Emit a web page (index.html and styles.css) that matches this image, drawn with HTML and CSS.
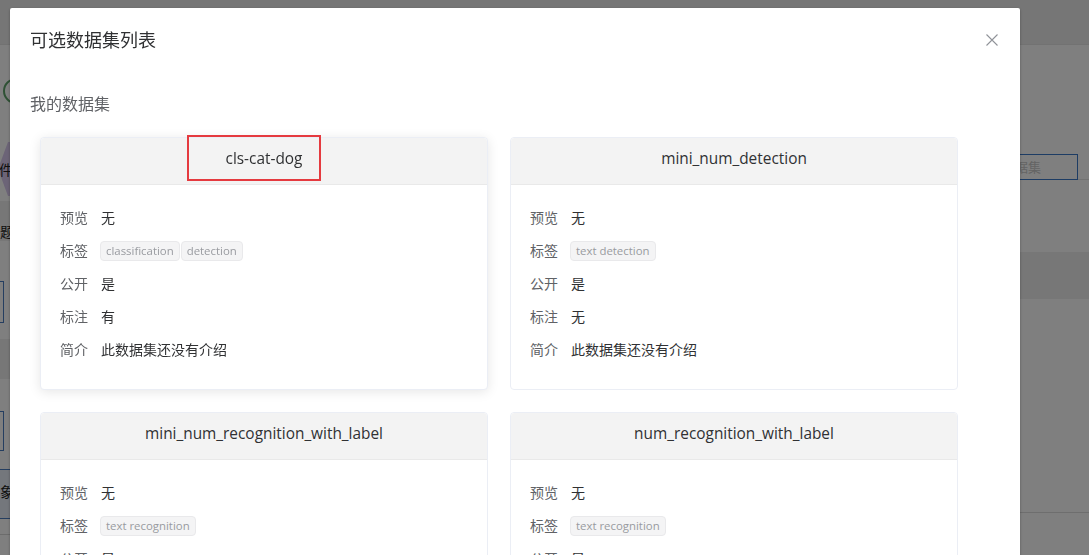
FILE: index.html
```html
<!DOCTYPE html>
<html lang="zh-CN">
<head>
<meta charset="utf-8">
<title>可选数据集列表</title>
<link rel="stylesheet" href="styles.css">
</head>
<body>
<div class="page">
  <div class="topbar"></div>
  <div class="page-body">
    <div class="strip-left">
      <div class="lt-circle"></div>
      <div class="lt-hex"><span>件</span></div>
      <div class="lt-band"><span>题</span></div>
      <div class="lt-box lt-box-1"></div>
      <div class="lt-band lt-band-2"></div>
      <div class="lt-box lt-box-2"></div>
      <div class="lt-fill"><span>象</span></div>
      <div class="lt-line"></div>
    </div>
    <div class="strip-center"></div>
    <div class="strip-right">
      <div class="rt-row">
        <div class="rt-input"><span>据集</span></div>
      </div>
      <div class="rt-band"></div>
      <div class="rt-line"></div>
    </div>
  </div>
</div>
<div class="overlay"></div>
<div class="dialog-wrapper">
  <div class="dialog">
    <div class="dialog-header">
      <span class="dialog-title">可选数据集列表</span>
      <button class="dialog-close" aria-label="关闭">
        <svg width="12" height="12" viewBox="0 0 12 12"><path d="M0.5 0.5 L11.5 11.5 M11.5 0.5 L0.5 11.5" stroke="#909399" stroke-width="1.1" fill="none"/></svg>
      </button>
    </div>
    <div class="dialog-body">
      <div class="section-title">我的数据集</div>
      <div class="card-grid">
        <div class="card card-hover">
          <div class="card-header">cls-cat-dog</div>
          <div class="card-body">
            <div class="row"><span class="label">预览</span><span class="value">无</span></div>
            <div class="row"><span class="label">标签</span><span class="tags"><span class="tag">classification</span><span class="tag">detection</span></span></div>
            <div class="row"><span class="label">公开</span><span class="value">是</span></div>
            <div class="row"><span class="label">标注</span><span class="value">有</span></div>
            <div class="row"><span class="label">简介</span><span class="value">此数据集还没有介绍</span></div>
          </div>
          <div class="highlight"></div>
        </div>
        <div class="card">
          <div class="card-header">mini_num_detection</div>
          <div class="card-body">
            <div class="row"><span class="label">预览</span><span class="value">无</span></div>
            <div class="row"><span class="label">标签</span><span class="tags"><span class="tag">text detection</span></span></div>
            <div class="row"><span class="label">公开</span><span class="value">是</span></div>
            <div class="row"><span class="label">标注</span><span class="value">无</span></div>
            <div class="row"><span class="label">简介</span><span class="value">此数据集还没有介绍</span></div>
          </div>
        </div>
        <div class="card">
          <div class="card-header">mini_num_recognition_with_label</div>
          <div class="card-body">
            <div class="row"><span class="label">预览</span><span class="value">无</span></div>
            <div class="row"><span class="label">标签</span><span class="tags"><span class="tag">text recognition</span></span></div>
            <div class="row"><span class="label">公开</span><span class="value">是</span></div>
            <div class="row"><span class="label">标注</span><span class="value">有</span></div>
            <div class="row"><span class="label">简介</span><span class="value">此数据集还没有介绍</span></div>
          </div>
        </div>
        <div class="card">
          <div class="card-header">num_recognition_with_label</div>
          <div class="card-body">
            <div class="row"><span class="label">预览</span><span class="value">无</span></div>
            <div class="row"><span class="label">标签</span><span class="tags"><span class="tag">text recognition</span></span></div>
            <div class="row"><span class="label">公开</span><span class="value">是</span></div>
            <div class="row"><span class="label">标注</span><span class="value">有</span></div>
            <div class="row"><span class="label">简介</span><span class="value">此数据集还没有介绍</span></div>
          </div>
        </div>
      </div>
    </div>
  </div>
</div>
</body>
</html>
```
FILE: styles.css
```css
* { box-sizing: border-box; }
html, body { margin: 0; height: 100%; overflow: hidden; }
body {
  font-family: "Open Sans", "Noto Sans CJK SC", sans-serif;
  font-size: 14px;
  color: #303133;
  background: #fff;
}

/* background page (mostly covered by the dialog) */
.page { display: flex; flex-direction: column; height: 100vh; }
.topbar { height: 45px; background: #ececec; border-bottom: 1px solid #e4e4e4; flex: none; }
.page-body { flex: 1; display: flex; }
.strip-left { width: 10px; flex: none; }
.strip-center { flex: 1; }
.strip-right { width: 69px; flex: none; }

.lt-circle { width: 26px; height: 26px; margin: 33px 0 0 3px; border: 2px solid #5fa36a; border-radius: 50%; }
.lt-hex {
  width: 40px; height: 54px; margin: 38px 0 0 -2px;
  background: #d9c9ee;
  clip-path: polygon(25% 0, 100% 0, 100% 100%, 25% 100%, 0 50%);
  display: flex; align-items: center;
}
.lt-hex span { margin-left: 1px; font-size: 14px; color: #222; }
.lt-band { width: 40px; height: 40px; margin-top: 5px; background: #eeeeee; display: flex; align-items: flex-end; padding-bottom: 0; }
.lt-band span { font-size: 14px; color: #222; }
.lt-band-2 { margin-top: 16px; }
.lt-box { width: 4px; height: 42px; border: 1px solid #4a7cc0; border-left: 0; }
.lt-box-1 { margin-top: 40px; }
.lt-box-2 { margin-top: 32px; height: 40px; }
.lt-fill { width: 40px; height: 50px; margin-top: 18px; background: #e8eef8; border-top: 1px solid #4a7cc0; border-bottom: 1px solid #4a7cc0; display: flex; align-items: center; padding-bottom: 6px; }
.lt-fill span { font-size: 14px; color: #222; }
.lt-line { width: 40px; height: 1px; margin-top: 15px; background: #d8d8d8; }

.rt-row { margin-top: 109px; height: 26px; border-bottom: 1px solid #e4e4e4; }
.rt-input {
  width: 58px; height: 26px; border: 1px solid #3a78c8; border-left: 0;
  font-size: 13px; line-height: 24px; color: #c8c8c8; white-space: nowrap;
  display: flex;
}
.rt-input span { margin-left: -5px; }
.rt-band { height: 47px; margin-top: 72px; background: #eeeeee; }
.rt-line { height: 1px; margin-top: 213px; background: #dcdcdc; }

.overlay { position: fixed; inset: 0; background: rgba(0, 0, 0, 0.5); }

/* dialog */
.dialog-wrapper { position: fixed; inset: 0; overflow: hidden; }
.dialog {
  position: relative;
  width: 1010px;
  margin: 8px 0 0 10px;
  background: #fff;
  border-radius: 2px;
  box-shadow: 0 1px 3px rgba(0, 0, 0, 0.3);
}
.dialog-header { padding: 20px 20px 10px; }
.dialog-title { font-size: 18px; line-height: 24px; color: #303133; }
.dialog-close {
  position: absolute; top: 26px; right: 22px;
  width: 12px; height: 12px; padding: 0; border: 0; background: none;
  display: flex;
}
.dialog-body { padding: 30px 20px; color: #606266; }
.section-title { font-size: 16px; line-height: 24px; color: #606266; }

.card-grid {
  display: grid;
  grid-template-columns: 448px 448px;
  column-gap: 22px;
  row-gap: 22px;
  margin: 21px 0 0 10px;
}
.card {
  position: relative;
  border: 1px solid #ebeef5;
  border-radius: 4px;
  background: #fff;
}
.card-hover { box-shadow: 0 2px 12px 0 rgba(0, 0, 0, 0.1); }
.card-header {
  background: #f3f3f3;
  border-bottom: 1px solid #e9e9e9;
  border-radius: 4px 4px 0 0;
  padding: 10px 10px 14px;
  font-size: 15.4px;
  line-height: 22px;
  text-align: center;
  color: #303133;
}
.card-body { padding: 15px 19px 24px; }
.row { height: 33px; display: flex; align-items: center; }
.label { width: 28px; margin-right: 13px; color: #606266; }
.value { color: #303133; }
.tags { display: flex; gap: 1px; margin: 2px 0 0 -1px; }
.tag {
  height: 20px; padding: 0 5px;
  font-size: 11.4px; line-height: 18px;
  color: #999ba0; background: #f4f4f5;
  border: 1px solid #e9e9eb; border-radius: 4px;
}
.highlight {
  position: absolute;
  left: 146px; top: -3px;
  width: 134px; height: 46px;
  border: 2px solid #e53a3f;
}
```
